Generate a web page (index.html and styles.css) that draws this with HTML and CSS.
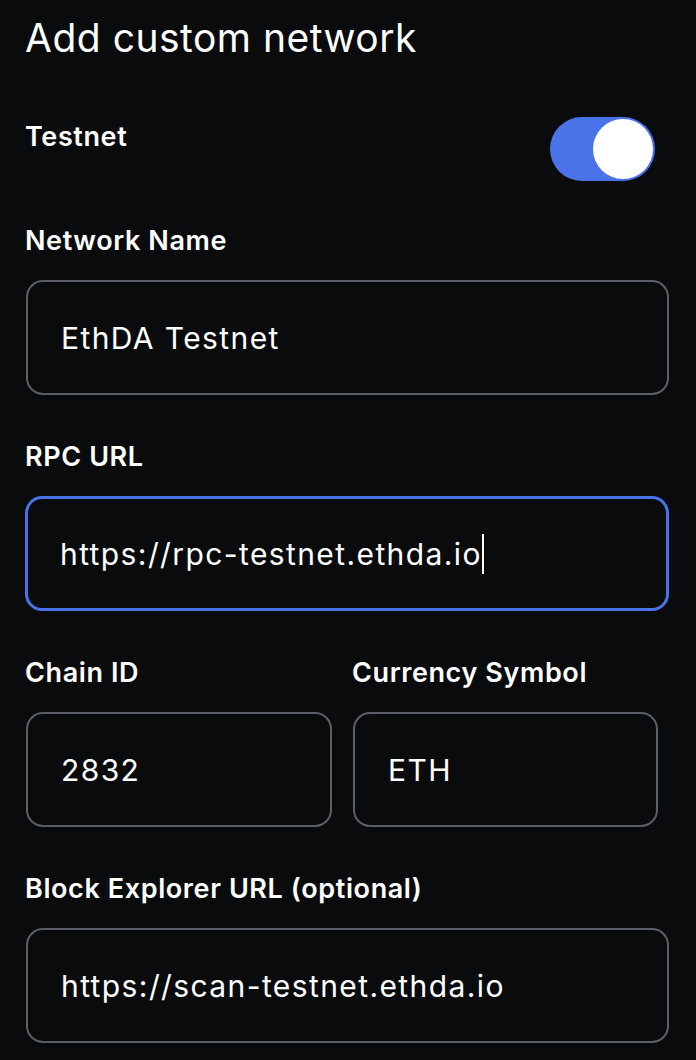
FILE: index.html
```html
<!DOCTYPE html>
<html lang="en">
<head>
<meta charset="utf-8">
<title>Add custom network</title>
<link rel="stylesheet" href="styles.css">
</head>
<body>
<main class="page">
  <h1 class="title">Add custom network</h1>

  <div class="toggle-row">
    <span class="label">Testnet</span>
    <span class="switch" role="switch" aria-checked="true"><span class="knob"></span></span>
  </div>

  <div class="field first">
    <label class="label">Network Name</label>
    <div class="input">EthDA Testnet</div>
  </div>

  <div class="field">
    <label class="label">RPC URL</label>
    <div class="input focused">https://rpc-testnet.ethda.io<span class="caret"></span></div>
  </div>

  <div class="field-pair">
    <div class="field">
      <label class="label">Chain ID</label>
      <div class="input">2832</div>
    </div>
    <div class="field">
      <label class="label">Currency Symbol</label>
      <div class="input">ETH</div>
    </div>
  </div>

  <div class="field">
    <label class="label">Block Explorer URL (optional)</label>
    <div class="input">https://scan-testnet.ethda.io</div>
  </div>
</main>
</body>
</html>
```

FILE: styles.css
```css
* { box-sizing: border-box; }
html, body {
  margin: 0;
  background: #0a0b0d;
  color: #ffffff;
  font-family: Inter, "Noto Sans", sans-serif;
}
.page {
  padding: 16px 27px 0 25px;
  width: 696px;
}
.title {
  margin: 0;
  font-size: 39px;
  line-height: 44px;
  font-weight: 400;
  letter-spacing: 0.5px;
}
.label {
  display: block;
  font-size: 27px;
  line-height: 32px;
  font-weight: 600;
  letter-spacing: 0.6px;
}
.toggle-row {
  margin-top: 57px;
  display: flex;
  justify-content: space-between;
  align-items: flex-start;
  padding-right: 14px;
}
.toggle-row .label { padding-top: 4px; }
.switch {
  width: 105px;
  height: 64px;
  border-radius: 32px;
  background: #4a73e9;
  display: flex;
  justify-content: flex-end;
  align-items: center;
  padding: 2px;
}
.knob {
  width: 60px;
  height: 60px;
  border-radius: 50%;
  background: #ffffff;
}
.field {
  display: flex;
  flex-direction: column;
  gap: 23px;
  margin-top: 46px;
}
.field.first { margin-top: 44px; }
.input {
  height: 115px;
  border: 2px solid #5b5f66;
  border-radius: 17px;
  display: flex;
  align-items: center;
  padding-left: 33px;
  font-size: 30px;
  font-weight: 400;
  letter-spacing: 1.4px;
  margin-left: 1px;
  white-space: nowrap;
}
.input.focused {
  border: 3px solid #4a73e9;
  padding-left: 32px;
  margin-left: 0;
}
.caret {
  display: inline-block;
  width: 2px;
  height: 40px;
  background: #ffffff;
}
.field-pair {
  display: grid;
  grid-template-columns: 307px 306px;
  column-gap: 20px;
}
```
